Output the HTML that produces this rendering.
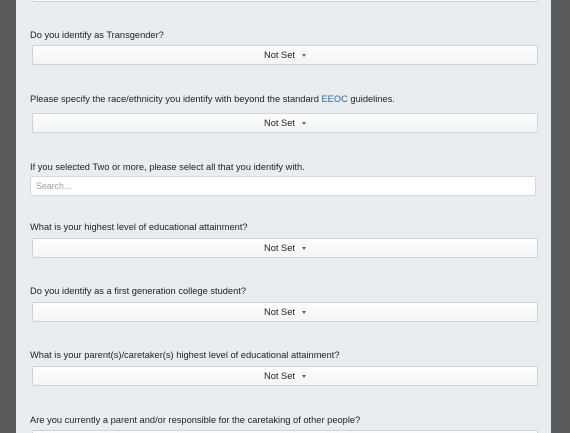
<!DOCTYPE html>
<html style="overflow:hidden;height:433px"><head><style>
body{margin:0;width:570px;height:433px;background:#58595b;overflow:hidden;position:relative;font-family:"Liberation Sans",Arial,sans-serif;}
.panel{position:absolute;left:16px;top:0;width:535px;height:433px;background:#e9edf0;}
.lab{position:absolute;left:30px;font-size:9.3px;color:#222;line-height:10px;white-space:nowrap}
.sel{position:absolute;left:32px;width:504px;height:18px;background:linear-gradient(#fdfdfd,#f3f4f5);border:1px solid #cfd3d6;border-radius:2px;font-size:9.3px;color:#222;text-align:center;line-height:18px;overflow:hidden}
.sel span{display:inline-block;margin-left:7px;width:0;height:0;border-left:2.5px solid transparent;border-right:2.5px solid transparent;border-top:3px solid #666;vertical-align:middle}
.search{position:absolute;left:30px;top:176px;height:18px;background:#fff;border:1px solid #d5d9dc;border-radius:2px;font-size:8.8px;color:#9aa0a4;line-height:18px;padding-left:5px;width:499px}
a{color:#2b6aa6;text-decoration:none}
</style></head><body>
<div class="panel"></div>
<div style="position:absolute;left:32px;top:-5px;width:504px;height:5px;background:#fafafa;border:1px solid #cfd3d6;border-radius:2px"></div>
<div class="lab" style="top:30px">Do you identify as Transgender?</div>
<div class="sel" style="top:45px">Not Set<span></span></div>
<div class="lab" style="top:94px">Please specify the race/ethnicity you identify with beyond the standard <a>EEOC</a> guidelines.</div>
<div class="sel" style="top:113px">Not Set<span></span></div>
<div class="lab" style="top:162px">If you selected Two or more, please select all that you identify with.</div>
<div class="search">Search...</div>
<div class="lab" style="top:222px">What is your highest level of educational attainment?</div>
<div class="sel" style="top:238px">Not Set<span></span></div>
<div class="lab" style="top:286px">Do you identify as a first generation college student?</div>
<div class="sel" style="top:302px">Not Set<span></span></div>
<div class="lab" style="top:350px">What is your parent(s)/caretaker(s) highest level of educational attainment?</div>
<div class="sel" style="top:366px">Not Set<span></span></div>
<div class="lab" style="top:415px">Are you currently a parent and/or responsible for the caretaking of other people?</div>
<div class="sel" style="top:430px;height:10px"></div>
</body></html>
